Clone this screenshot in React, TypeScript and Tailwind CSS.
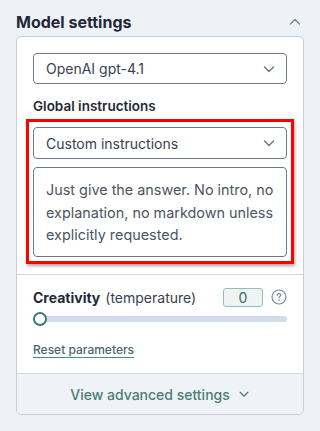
import React from "react";

const Chevron = ({ className = "", up = false }: { className?: string; up?: boolean }) => (
  <svg width="14" height="14" viewBox="0 0 14 14" fill="none" className={className}>
    <path d={up ? "M2.5 9 L7 4.5 L11.5 9" : "M2.5 5 L7 9.5 L11.5 5"} stroke="currentColor" strokeWidth="1.5" strokeLinecap="round" strokeLinejoin="round" />
  </svg>
);

export default function App() {
  return (
    <div className="w-[320px] h-[431px] bg-[#eef2f7] px-4 pt-[10px]" style={{ fontFamily: "Inter, 'Noto Sans', sans-serif" }}>
      <div className="flex items-center justify-between h-[24px]">
        <h2 className="text-[16px] font-bold text-[#1f2937] leading-[24px]">Model settings</h2>
        <Chevron up className="text-[#7b8799] mr-[2px]" />
      </div>
      <div className="mt-[2px] bg-white border border-[#c6cedb] rounded-[5px] overflow-hidden">
        <div className="px-4 pt-4">
          <div className="h-[31px] border border-[#6b788c] rounded-[4px] flex items-center justify-between pl-3 pr-[10px] text-[14px] text-[#374151]">
            <span>OpenAI gpt-4.1</span>
            <Chevron className="text-[#6b7a8f]" />
          </div>
          <div className="mt-3 text-[13.5px] font-semibold text-[#1f2937] leading-[20px]">Global instructions</div>
          <div className="mt-[3px] -mx-[7px] border-[3px] border-[#ff0000] px-[4px] pt-[5px] pb-[4px] shadow-[1px_2px_3px_rgba(0,0,0,0.35)]">
            <div className="h-[32px] border border-[#6b788c] rounded-[4px] flex items-center justify-between pl-3 pr-[10px] text-[14px] text-[#374151]">
              <span>Custom instructions</span>
              <Chevron className="text-[#6b7a8f]" />
            </div>
            <div className="mt-2 h-[90px] border border-[#6b788c] rounded-[4px] pl-3 pr-2 pt-[11px] text-[14.4px] leading-[22.5px] text-[#4b5563]">
              Just give the answer. No intro, no explanation, no markdown unless explicitly requested.
            </div>
          </div>
        </div>
        <div className="mt-[10px] border-t border-[#d3d9e3]" />
        <div className="px-4 pt-[12px] pb-[14px]">
          <div className="flex items-center h-[20px]">
            <span className="text-[14px] font-bold text-[#1f2937]">Creativity</span>
            <span className="ml-[5px] text-[14px] text-[#374151]">(temperature)</span>
            <div className="ml-auto w-[40px] h-[19px] border border-[#8ec3b3] bg-[#eef4f1] rounded-[3px] flex items-center justify-center text-[14px] text-[#3d6a63]">0</div>
            <svg width="16" height="16" viewBox="0 0 16 16" className="ml-[8px] text-[#7b8799]" fill="none">
              <circle cx="8" cy="8" r="7" stroke="currentColor" strokeWidth="1.2" />
              <path d="M6.2 6.3 C6.2 5.2 7 4.6 8 4.6 C9 4.6 9.8 5.3 9.8 6.2 C9.8 7.3 8 7.4 8 8.8" stroke="currentColor" strokeWidth="1.2" strokeLinecap="round" />
              <circle cx="8" cy="11.1" r="0.8" fill="currentColor" />
            </svg>
          </div>
          <div className="relative mt-[5px] h-[14px] flex items-center">
            <div className="w-full h-[6px] rounded-full bg-[#d3dcea]" />
            <div className="absolute left-0 top-0 w-[14px] h-[14px] rounded-full bg-white border-[2.5px] border-[#3e7b70]" />
          </div>
          <div className="mt-[15px] text-[12px] font-medium text-[#4c6670] underline decoration-[#4e8a80] underline-offset-[3px] leading-[18px]">Reset parameters</div>
        </div>
        <div className="border-t border-[#d3d9e3] bg-[#eff2f6] h-[41px] flex items-center justify-center gap-[8px] text-[#4b7d78]">
          <span className="text-[14px] font-medium">View advanced settings</span>
          <Chevron className="text-[#4b7d78] w-[12px] h-[12px]" />
        </div>
      </div>
    </div>
  );
}
